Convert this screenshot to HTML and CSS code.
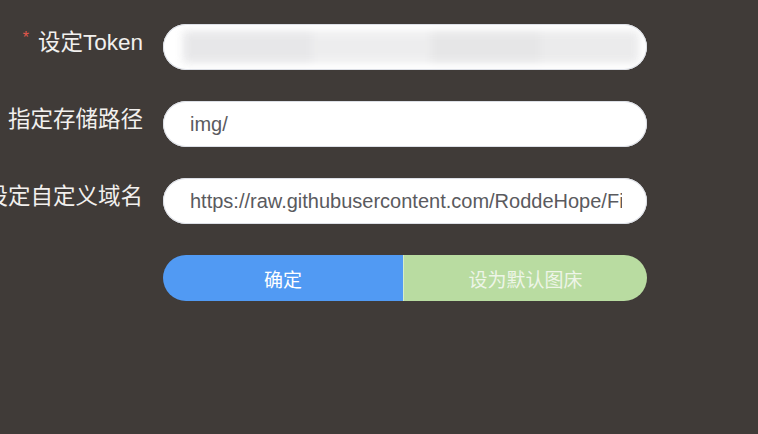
FILE: index.html
```html
<!DOCTYPE html>
<html lang="zh">
<head>
<meta charset="utf-8">
<link rel="stylesheet" href="styles.css">
</head>
<body>
<form class="form">
  <div class="row">
    <label class="label"><span class="req">*</span>设定Token</label>
    <div class="input token">
      <div class="blur">
        <span class="b b1"></span><span class="b b2"></span><span class="b b3"></span><span class="b b4"></span>
      </div>
    </div>
  </div>
  <div class="row">
    <label class="label">指定存储路径</label>
    <div class="input"><span class="val">img/</span></div>
  </div>
  <div class="row">
    <label class="label">设定自定义域名</label>
    <div class="input"><span class="val">https://raw.githubusercontent.com/RoddeHope/Figure-bed</span></div>
  </div>
  <div class="row">
    <div class="label"></div>
    <div class="btns">
      <button type="button" class="btn ok">确定</button>
      <button type="button" class="btn def">设为默认图床</button>
    </div>
  </div>
</form>
</body>
</html>
```

FILE: styles.css
```css
html, body {
  margin: 0;
  padding: 0;
  background: #403b38;
  width: 758px;
  height: 434px;
  overflow: hidden;
}
.form {
  padding-top: 24px;
  display: flex;
  flex-direction: column;
  gap: 31px;
  font-family: "Liberation Sans", "Noto Sans CJK SC", sans-serif;
}
.row {
  display: grid;
  grid-template-columns: 143px 484px;
  column-gap: 20px;
  height: 46px;
}
.label {
  display: flex;
  justify-content: flex-end;
  align-items: center;
  height: 32px;
  white-space: nowrap;
  font-size: 22.5px;
  color: #f2f0ee;
  font-family: "Liberation Sans", "Noto Sans CJK SC", sans-serif;
}
.req {
  color: #e2574c;
  font-size: 16px;
  margin-right: 9px;
  position: relative;
  top: -2px;
}
.input {
  background: #fff;
  border-radius: 23px;
  height: 46px;
  display: flex;
  align-items: center;
  padding: 0 25px 0 27px;
  overflow: hidden;
  box-sizing: border-box;
  box-shadow: inset 0 0 0 1px #dcdfe6;
}
.val {
  font-size: 20px;
  color: #5a5a5e;
  white-space: nowrap;
  overflow: hidden;
  display: block;
  width: 100%;
}
.token {
  padding: 0 8px 0 20px;
}
.blur {
  display: flex;
  width: 100%;
  height: 32px;
  filter: blur(4px);
  opacity: 0.9;
}
.b { display: block; height: 100%; }
.b1 { flex: 130; background: #e5e5e7; }
.b2 { flex: 120; background: #ececed; }
.b3 { flex: 110; background: #e4e4e5; }
.b4 { flex: 100; background: #e9e9ea; }
.btns {
  display: flex;
  height: 46px;
}
.btn {
  border: 0;
  margin: 0;
  height: 46px;
  font-size: 19px;
  font-family: "Noto Sans CJK SC", sans-serif;
  color: #fff;
  padding: 0;
}
.ok {
  width: 240px;
  background: #519af3;
  border-radius: 23px 0 0 23px;
}
.def {
  flex: 1;
  background: #b9dca1;
  color: #eef5e8;
  border-left: 1px solid #d6ecc8;
  border-radius: 0 23px 23px 0;
}
```
